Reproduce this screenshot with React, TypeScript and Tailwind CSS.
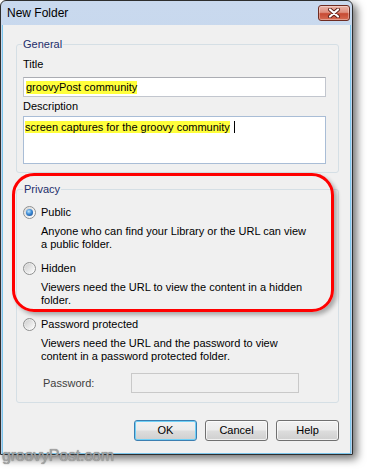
import * as React from 'react';

// ──────────────────────────────────────────────────────────────────────────────
// Bits of Windows 7 chrome
// ──────────────────────────────────────────────────────────────────────────────
function CloseButton() {
  return (
    <div className="mr-[2px] flex h-[16px] w-[32px] items-center justify-center rounded-[3px] border border-[#6e2b21] bg-[linear-gradient(to_bottom,#eab2a6_0%,#e0907f_45%,#c74a33_55%,#d66b52_100%)] shadow-[inset_0_0_0_1px_rgba(255,255,255,0.35)]">
      <svg width="14" height="10" viewBox="0 0 14 10">
        <path d="M3 1.5 L11 8.5 M11 1.5 L3 8.5" stroke="#5a2018" strokeWidth="4" strokeLinecap="round" />
        <path d="M3 1.5 L11 8.5 M11 1.5 L3 8.5" stroke="#ffffff" strokeWidth="2.2" strokeLinecap="round" />
      </svg>
    </div>
  );
}

function Radio({ checked }: { checked?: boolean }) {
  return (
    <span className="flex h-[13px] w-[13px] shrink-0 items-center justify-center rounded-full border border-[#8e8f8f] bg-[linear-gradient(135deg,#dcdcdc_0%,#f4f4f4_60%,#ffffff_100%)]">
      <span className="flex h-[9px] w-[9px] items-center justify-center rounded-full bg-[linear-gradient(135deg,#cfcfcf,#fbfbfb)]">
        {checked && (
          <span className="h-[7px] w-[7px] rounded-full bg-[radial-gradient(circle_at_40%_35%,#bfe6fb_0%,#3b8ad6_45%,#173f7e_100%)]" />
        )}
      </span>
    </span>
  );
}

function Option({
  label,
  lines,
  checked,
  className,
}: {
  label: string;
  lines: string[];
  checked?: boolean;
  className?: string;
}) {
  return (
    <div className={className}>
      <div className="flex h-[13px] items-center gap-[5px]">
        <Radio checked={checked} />
        <span className="leading-[13px]">{label}</span>
      </div>
      <div className="mt-[6px] pl-[18px] leading-[13px]">
        {lines.map((l) => (
          <div key={l}>{l}</div>
        ))}
      </div>
    </div>
  );
}

function Button({ children, focused }: { children: React.ReactNode; focused?: boolean }) {
  return (
    <div
      className={
        'flex h-[21px] w-[63px] items-center justify-center rounded-[3px] border bg-[linear-gradient(to_bottom,#f2f2f2_0%,#ebebeb_49%,#dddddd_51%,#cfcfcf_100%)] leading-[13px] ' +
        (focused
          ? 'border-[#3c7fb1] shadow-[inset_0_0_0_1px_#6fd0f7]'
          : 'border-[#707070] shadow-[inset_0_0_0_1px_rgba(255,255,255,0.7)]')
      }
    >
      {children}
    </div>
  );
}

// ──────────────────────────────────────────────────────────────────────────────
// App
// ──────────────────────────────────────────────────────────────────────────────
export default function App() {
  return (
    <div className="relative h-[470px] w-[367px] overflow-hidden bg-white font-['Liberation_Sans',Arial,sans-serif] text-[11px] text-black">
      {/* window */}
      <div className="flex h-[455px] w-[353px] flex-col rounded-t-[6px] border border-[#2e2e2e] bg-[linear-gradient(to_bottom,#c9d9ee,#b9cfe8)] shadow-[4px_4px_9px_rgba(0,0,0,0.55)]">
        <div className="flex h-[24px] shrink-0 items-center justify-between pl-[6px]">
          <span className="text-[12px] leading-[14px]">New Folder</span>
          <CloseButton />
        </div>

        <div className="mx-[1px] flex-1 border-x border-b border-[#7cc6ec] bg-[#f0f0f0]">
          {/* General */}
          <fieldset className="ml-[13px] mr-[11px] mt-[13px] rounded-[3px] border border-[#d5dfe5] pb-[8px] pl-[6px] pr-[12px] pt-[7px]">
            <legend className="ml-[-1px] px-[1px] leading-[13px] text-[#1d2e6b]">General</legend>
            <div className="leading-[13px]">Title</div>
            <div className="mt-[6px] flex h-[20px] items-center border border-[#c2c6ce] border-t-[#abadb3] bg-white pl-[2px]">
              <span className="bg-[#ffff3c] leading-[13px]">groovyPost community</span>
            </div>
            <div className="mt-[3px] leading-[13px]">Description</div>
            <div className="mt-[3px] h-[48px] border border-[#a9bdd6] bg-white pl-[1px] pt-[4px]">
              <div className="flex items-center leading-[12px]">
                <span className="bg-[#ffff3c]">screen captures for the groovy community</span>
                <span className="ml-[4px] h-[12px] w-[1px] bg-black" />
              </div>
            </div>
          </fieldset>

          {/* Privacy */}
          <fieldset className="ml-[13px] mr-[11px] mt-[10px] rounded-[3px] border border-[#d5dfe5] pb-[9px] pl-[6px] pr-[12px] pt-[10px]">
            <legend className="px-[1px] leading-[13px] text-[#1d2e6b]">Privacy</legend>
            <Option
              checked
              label="Public"
              lines={['Anyone who can find your Library or the URL can view', 'a public folder.']}
            />
            <Option
              className="mt-[11px]"
              label="Hidden"
              lines={['Viewers need the URL to view the content in a hidden', 'folder.']}
            />
            <Option
              className="mt-[11px]"
              label="Password protected"
              lines={['Viewers need the URL and the password to view', 'content in a password protected folder.']}
            />
            <div className="mt-[10px] flex h-[20px] items-center">
              <span className="ml-[20px] w-[88px] leading-[13px] text-[#404040]">Password:</span>
              <div className="h-[20px] w-[168px] border border-[#c9c9c9] bg-[#f0f0f0]" />
            </div>
          </fieldset>

          <div className="mr-[11px] mt-[17px] flex justify-end gap-[8px]">
            <Button focused>OK</Button>
            <Button>Cancel</Button>
            <Button>Help</Button>
          </div>
        </div>
      </div>

      {/* red highlight drawn over the Privacy group */}
      <div className="pointer-events-none absolute left-[12px] top-[173px] h-[139px] w-[322px] rounded-[22px] border-[3px] border-[#ff0000] shadow-[3px_3px_4px_rgba(0,0,0,0.3)]" />

      {/* watermark */}
      <div className="absolute left-[2px] top-[448px] text-[16px] leading-[16px] tracking-[-0.2px] text-[#a3a3a3] [text-shadow:0_0_1px_#6f6f6f]">
        groovyPost.com
      </div>
    </div>
  );
}
